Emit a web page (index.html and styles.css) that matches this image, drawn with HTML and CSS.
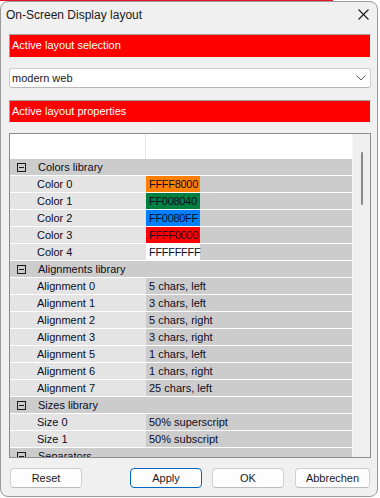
FILE: index.html
```html
<!DOCTYPE html>
<html lang="en">
<head>
    <meta charset="UTF-8">
    <title>On-Screen Display layout</title>
    <link rel="stylesheet" href="styles.css">
</head>
<body>

    <div class="window">
        <div class="titlebar">
            <span class="title">On-Screen Display layout</span>
            <svg class="close" width="11" height="11" viewBox="0 0 11 11">
                <path d="M0.5 0.5 L10.5 10.5 M10.5 0.5 L0.5 10.5" stroke="#1a1a1a" stroke-width="1.1" fill="none"/>
            </svg>
        </div>

        <div class="content">
            <div class="section-label">Active layout selection</div>

            <div class="combo">
                <span>modern web</span>
                <svg class="chevron" width="10" height="6" viewBox="0 0 10 6">
                    <path d="M0.5 0.5 L5 5 L9.5 0.5" stroke="#5a5a5a" stroke-width="1" fill="none"/>
                </svg>
            </div>

            <div class="section-label short">Active layout properties</div>

            <div class="propgrid">
                <div class="grid-body">
                    <div class="grid-header">
                        <div class="hcell"></div>
                        <div class="hcell"></div>
                    </div>

                    <div class="category"><span class="toggle"></span>Colors library</div>
                    <div class="prop"><div class="pname">Color 0</div><div class="pvalue"><span class="swatch sw-orange">FFFF8000</span></div></div>
                    <div class="prop"><div class="pname">Color 1</div><div class="pvalue"><span class="swatch sw-green">FF008040</span></div></div>
                    <div class="prop"><div class="pname">Color 2</div><div class="pvalue"><span class="swatch sw-blue">FF0080FF</span></div></div>
                    <div class="prop"><div class="pname">Color 3</div><div class="pvalue"><span class="swatch sw-red">FFFF0000</span></div></div>
                    <div class="prop"><div class="pname">Color 4</div><div class="pvalue"><span class="swatch sw-white">FFFFFFFF</span></div></div>

                    <div class="category"><span class="toggle"></span>Alignments library</div>
                    <div class="prop"><div class="pname">Alignment 0</div><div class="pvalue">5 chars, left</div></div>
                    <div class="prop"><div class="pname">Alignment 1</div><div class="pvalue">3 chars, left</div></div>
                    <div class="prop"><div class="pname">Alignment 2</div><div class="pvalue">5 chars, right</div></div>
                    <div class="prop"><div class="pname">Alignment 3</div><div class="pvalue">3 chars, right</div></div>
                    <div class="prop"><div class="pname">Alignment 5</div><div class="pvalue">1 chars, left</div></div>
                    <div class="prop"><div class="pname">Alignment 6</div><div class="pvalue">1 chars, right</div></div>
                    <div class="prop"><div class="pname">Alignment 7</div><div class="pvalue">25 chars, left</div></div>

                    <div class="category"><span class="toggle"></span>Sizes library</div>
                    <div class="prop"><div class="pname">Size 0</div><div class="pvalue">50% superscript</div></div>
                    <div class="prop"><div class="pname">Size 1</div><div class="pvalue">50% subscript</div></div>

                    <div class="category"><span class="toggle"></span>Separators</div>
                </div>
                <div class="scrollbar"><div class="thumb"></div></div>
            </div>

            <div class="buttons">
                <button class="btn reset">Reset</button>
                <button class="btn default">Apply</button>
                <button class="btn">OK</button>
                <button class="btn wide">Abbrechen</button>
            </div>
        </div>
    </div>

</body>
</html>
```

FILE: styles.css
```css
body {
    margin: 0;
    font-family: "Segoe UI", "Liberation Sans", Arial, sans-serif;
    font-size: 11px;
    color: #000;
    background: linear-gradient(#e81123, #e81123) no-repeat 0 0 / 333px 1px, #ffffff;
}
.window {
    width: 378px;
    height: 496px;
    margin-top: 1px;
    box-sizing: border-box;
    border: 1px solid #9a9a9a;
    border-radius: 8px;
    background-color: #f0f0f0;
    overflow: hidden;
}
.titlebar {
    height: 32px;
    display: flex;
    justify-content: space-between;
    align-items: flex-start;
}
.title {
    padding: 5px 0 0 5px;
    font-size: 12px;
    line-height: 16px;
    color: #1a1a1a;
}
.close {
    margin: 7px 8px 0 0;
}
.content {
    padding: 0 6px 0 8px;
}
.section-label {
    height: 24px;
    box-sizing: border-box;
    border: 1px solid;
    border-color: #a0a0a0 #f0f0f0 #f0f0f0 #a0a0a0;
    background-color: #ff0000;
    color: #fff;
    padding-left: 2px;
    line-height: 21px;
}
.section-label.short {
    height: 23px;
    line-height: 20px;
}
.combo {
    margin: 10px 0 12px;
    height: 20px;
    box-sizing: border-box;
    border: 1px solid #cccccc;
    border-bottom-color: #b8b8b8;
    border-radius: 3px;
    background-color: #fff;
    display: flex;
    align-items: center;
    justify-content: space-between;
    padding: 0 4px 0 2px;
    color: #1a1a1a;
}
.propgrid {
    margin-top: 10px;
    height: 325px;
    box-sizing: border-box;
    border: 1px solid #8c8c8c;
    display: flex;
    overflow: hidden;
}
.grid-body {
    flex: 1;
    overflow: hidden;
    background-color: #fff;
    color: #0c0c24;
}
.grid-header {
    height: 25px;
    display: grid;
    grid-template-columns: 136px 1fr;
}
.hcell:first-child {
    border-right: 1px solid #e6e6e6;
}
.category {
    height: 16px;
    line-height: 16px;
    border-bottom: 1px solid #fff;
    background-color: #cccccc;
    display: flex;
    align-items: center;
}
.toggle {
    width: 9px;
    height: 9px;
    box-sizing: border-box;
    border: 1px solid #1a1a1a;
    margin: 0 12px 0 7px;
    display: flex;
    align-items: center;
    justify-content: center;
}
.toggle::after {
    content: "";
    width: 5px;
    height: 1px;
    background-color: #1a1a1a;
}
.prop {
    height: 16px;
    line-height: 16px;
    border-bottom: 1px solid #fff;
    display: grid;
    grid-template-columns: 136px 1fr;
}
.pname {
    background-color: #e4e4e4;
    padding-left: 27px;
    white-space: nowrap;
}
.pvalue {
    background-color: #cccccc;
    padding-left: 3px;
    white-space: nowrap;
}
.swatch {
    display: block;
    width: 54px;
    margin-left: -3px;
    padding-left: 3px;
    box-sizing: border-box;
    letter-spacing: -0.3px;
}
.sw-orange { background-color: #ff8000; }
.sw-green { background-color: #008040; }
.sw-blue { background-color: #0080ff; }
.sw-red { background-color: #ff0000; }
.sw-white { background-color: #ffffff; }
.scrollbar {
    width: 17px;
    border-left: 1px solid #f7f7f7;
    background-color: #efefef;
}
.thumb {
    width: 2px;
    height: 53px;
    margin: 18px auto 0;
    border-radius: 1px;
    background-color: #8a8a8a;
}
.buttons {
    margin-top: 10px;
    display: flex;
    gap: 10px;
    padding: 0 1px;
}
.btn {
    width: 72px;
    height: 20px;
    padding: 0;
    font-family: inherit;
    font-size: 11px;
    color: #1a1a1a;
    background-color: #fdfdfd;
    border: 1px solid #d0d0d0;
    border-bottom-color: #bcbcbc;
    border-radius: 4px;
}
.btn.reset {
    margin-right: 38px;
}
.btn.default {
    border: 1px solid #0067c0;
}
.btn.wide {
    width: 75px;
    margin-left: 1px;
}
```
